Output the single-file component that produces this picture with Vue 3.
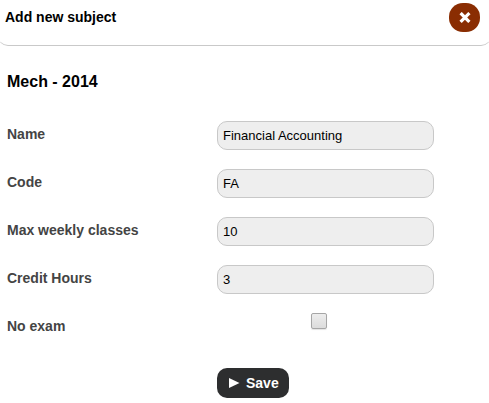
<script setup>
import { reactive, ref } from 'vue'

const fields = reactive([
  { id: 'name', label: 'Name', value: 'Financial Accounting' },
  { id: 'code', label: 'Code', value: 'FA' },
  { id: 'max-classes', label: 'Max weekly classes', value: '10' },
  { id: 'credit-hours', label: 'Credit Hours', value: '3' }
])
const noExam = ref(false)
</script>

<template>
  <section class="dialog">
    <header class="bar">
      <h1 class="title">Add new subject</h1>
      <button type="button" class="close" aria-label="Close">
        <svg width="12" height="12" viewBox="0 0 12 12" aria-hidden="true">
          <path d="M2.7 2.2L9.3 8.8M9.3 2.2L2.7 8.8" stroke="#fff" stroke-width="3.2" stroke-linecap="square" />
        </svg>
      </button>
    </header>
    <form class="form" @submit.prevent>
      <h2 class="group">Mech - 2014</h2>
      <div v-for="field in fields" :key="field.id" class="row">
        <label class="label" :for="field.id">{{ field.label }}</label>
        <input :id="field.id" v-model="field.value" class="text" type="text" />
      </div>
      <div class="row">
        <label class="label" for="no-exam">No exam</label>
        <div class="check-cell">
          <input id="no-exam" v-model="noExam" class="check" type="checkbox" />
        </div>
      </div>
      <div class="actions">
        <button type="submit" class="save">
          <svg width="11" height="10" viewBox="0 0 11 10" aria-hidden="true">
            <path d="M0 0L10.5 5L0 10Z" fill="#fff" />
          </svg>
          Save
        </button>
      </div>
    </form>
  </section>
</template>

<style>
body {
  margin: 0;
  background: #fff;
}
</style>

<style scoped>
.dialog {
  font-family: "Liberation Sans", Arial, sans-serif;
  color: #000;
}
.bar {
  display: flex;
  justify-content: space-between;
  align-items: flex-start;
  box-sizing: border-box;
  height: 46px;
  margin: 0 -2px;
  padding: 3px 11px 0 7px;
  border-bottom: 1px solid #c9c9c9;
  border-radius: 0 0 10px 10px;
}
.title {
  margin: 0;
  padding-top: 4px;
  font-size: 14px;
  line-height: 20px;
  font-weight: bold;
}
.close {
  display: flex;
  align-items: center;
  justify-content: center;
  width: 31px;
  height: 29px;
  padding: 0;
  border: 0;
  border-radius: 14px;
  background: #8a2d02;
}
.form {
  padding: 26px 55px 0 7px;
}
.group {
  margin: 0 0 29px;
  font-size: 16px;
  line-height: 20px;
  font-weight: bold;
}
.row {
  display: grid;
  grid-template-columns: 210px minmax(0, 1fr);
  height: 29px;
  margin-bottom: 19px;
}
.label {
  padding-top: 3px;
  font-size: 14px;
  line-height: 20px;
  font-weight: bold;
  color: #444;
}
.text {
  box-sizing: border-box;
  width: 100%;
  height: 29px;
  margin: 0;
  padding: 0 5px;
  border: 1px solid #c8c8c8;
  border-radius: 10px;
  background: #eee;
  font-family: inherit;
  font-size: 13px;
  color: #000;
}
.check-cell {
  display: flex;
  justify-content: center;
  align-items: flex-start;
  padding-right: 13px;
}
.check {
  appearance: none;
  box-sizing: border-box;
  width: 16px;
  height: 16px;
  margin: 0;
  border: 1px solid #a6a6a6;
  border-radius: 2px;
  background: linear-gradient(#ededed, #dcdcdc);
  box-shadow: 0 1px 1px #e4e4e4;
}
.check:checked {
  background: #555;
}
.actions {
  padding: 7px 0 5px 210px;
}
.save {
  display: flex;
  align-items: center;
  gap: 6px;
  height: 30px;
  padding: 0 10px 0 12px;
  border: 0;
  border-radius: 10px;
  background: #2d2e2f;
  color: #fff;
  font-family: inherit;
  font-size: 14px;
  font-weight: bold;
}
</style>
